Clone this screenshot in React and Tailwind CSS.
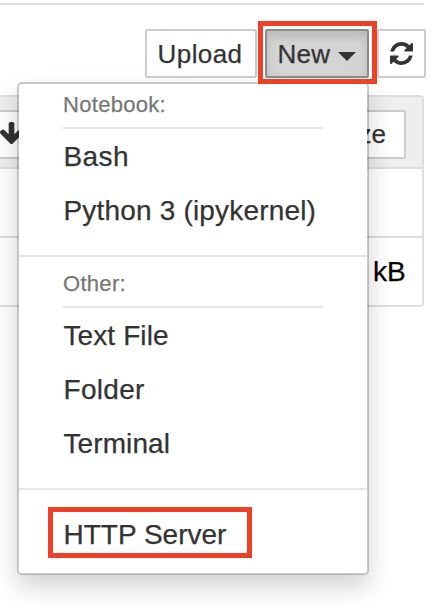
function MenuItem({ children, className = "tracking-[0.1px]" }) {
  return (
    <li className="h-[54px] pl-[44.5px] pt-[8px] text-[28px] leading-[40px] whitespace-nowrap">
      <span className={className}>{children}</span>
    </li>
  );
}

function SectionLabel({ children, className }) {
  return (
    <li
      className={`ml-[44px] w-[260px] flex flex-col justify-end pb-[11px] border-b-2 border-[#e5e5e5] text-[22px] leading-[22px] tracking-[0.3px] text-[#777] ${className}`}
    >
      <span>{children}</span>
    </li>
  );
}

function Divider({ className }) {
  return <li className={`h-[2px] bg-[#e5e5e5] ${className}`} />;
}

function RefreshIcon() {
  return (
    <svg className="mb-[1px]" width="23" height="23" viewBox="0 128 1536 1536" fill="#333">
      <path d="M1511 1056q0 5-1 7-64 268-268 434.5t-478 166.5q-146 0-282.5-55t-243.5-157l-129 129q-19 19-45 19t-45-19-19-45v-448q0-26 19-45t45-19h448q26 0 45 19t19 45-19 45l-137 137q71 66 161 102t187 36q134 0 250-65t186-179q11-17 53-117 8-23 30-23h192q13 0 22.5 9.5t9.5 22.5zm25-800v448q0 26-19 45t-45 19h-448q-26 0-45-19t-19-45 19-45l138-138q-148-137-349-137-134 0-250 65t-186 179q-11 17-53 117-8 23-30 23h-199q-13 0-22.5-9.5t-9.5-22.5v-7q65-268 270-434.5t480-166.5q146 0 284 55.5t245 156.5l130-129q19-19 45-19t45 19 19 45z" />
    </svg>
  );
}

function ArrowDownIcon() {
  return (
    <svg className="mb-[3px]" width="23" height="22" viewBox="117 128 1558 1483" fill="#333">
      <path d="M1675 832q0 53-37 90l-651 652q-39 37-91 37-53 0-90-37l-651-652q-38-36-38-90 0-53 38-91l74-75q39-37 91-37 53 0 90 37l294 294v-704q0-52 38-90t90-38h128q52 0 90 38t38 90v704l294-294q37-37 90-37 52 0 91 37l75 75q37 39 37 91z" />
    </svg>
  );
}

function Toolbar() {
  return (
    <div className="flex h-[49px] ml-[145px] mt-[24px] text-[26px]">
      <button className="w-[112px] border-2 border-[#ccc] rounded-[2px] bg-white tracking-[0.4px] leading-[46px] pr-[2px]">
        Upload
      </button>
      <div className="relative ml-[8px] w-[104px]">
        <button className="w-full h-full flex items-center justify-center gap-[8px] border-2 border-[#8c8c8c] rounded-[2px] bg-[#d4d4d4] shadow-[inset_0_6px_10px_rgba(0,0,0,0.125)]">
          <span className="tracking-[0.3px] pt-[1px]">New</span>
          <span className="mt-[6px] border-x-[9px] border-x-transparent border-t-[9px] border-t-[#333]" />
        </button>
        <div className="absolute z-20 -left-[7px] -top-[8px] w-[119px] h-[63px] border-[5px] border-[#ee4026]" />
      </div>
      <button className="ml-[8px] w-[49px] flex items-center justify-center border-2 border-[#ccc] rounded-[2px] bg-white">
        <RefreshIcon />
      </button>
    </div>
  );
}

function FileList() {
  return (
    <div className="mt-[17px] w-[424px] h-[212px] border-2 border-l-0 border-[#ddd] rounded-r-[4px]">
      <div className="h-[72px] flex justify-between pt-[13px] pr-[16px] bg-[#eee] border-b-2 border-[#ddd]">
        <div className="w-[60px] h-[49px] flex items-center border-y-2 border-[#ccc] bg-white">
          <ArrowDownIcon />
        </div>
        <div className="w-[110px] h-[49px] pr-[18px] text-right text-[26px] leading-[45px] border-2 border-[#ccc] rounded-[2px] bg-white">
          Size
        </div>
      </div>
      <div className="h-[69px] border-b-2 border-[#ddd]" />
      <div className="h-[67px] pr-[16px] text-right text-[28px] leading-[67px] tracking-[0.2px] text-black">1.2 kB</div>
    </div>
  );
}

function NewMenu() {
  return (
    <ul className="absolute z-10 left-[17px] top-[82px] w-[352px] h-[493px] rounded-[5px] border-2 border-black/20 bg-white bg-clip-padding shadow-[0_12px_24px_rgba(0,0,0,0.175)]">
      <SectionLabel className="h-[45px]">Notebook:</SectionLabel>
      <MenuItem className="tracking-[0.4px]">Bash</MenuItem>
      <MenuItem className="tracking-[0.18px]">Python 3 (ipykernel)</MenuItem>
      <Divider className="mt-[18px]" />
      <SectionLabel className="h-[51px]">Other:</SectionLabel>
      <MenuItem>Text File</MenuItem>
      <MenuItem className="tracking-[0.3px]">Folder</MenuItem>
      <MenuItem>Terminal</MenuItem>
      <Divider className="mt-[18px] mb-[18px]" />
      <li className="relative h-[54px] pl-[44.5px] pt-[7px] text-[28px] leading-[40px]">
        HTTP Server
        <span className="absolute left-[29px] -top-[1px] w-[204px] h-[51px] border-[5px] border-[#ee4026]" />
      </li>
    </ul>
  );
}

export default function App() {
  return (
    <div className="relative w-[448px] h-[608px] overflow-hidden bg-white text-[#333] font-['Helvetica_Neue','Liberation_Sans',Arial,sans-serif] [-webkit-text-stroke:0.25px_currentColor]">
      <div className="pt-[3px]">
        <div className="w-[424px] h-[2px] bg-[#ddd]" />
      </div>
      <Toolbar />
      <FileList />
      <NewMenu />
    </div>
  );
}
